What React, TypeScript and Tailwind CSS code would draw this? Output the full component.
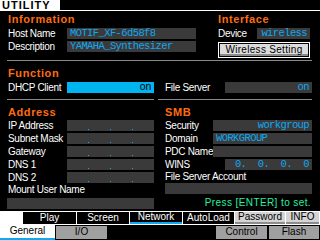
import React from 'react';

const orange = 'text-[#ff6c10]';

// Header text for each section
const Head = ({ children, className }: { children: React.ReactNode; className?: string }) => (
  <div className={`h-[11px] leading-[11px] text-[11px] font-bold tracking-[0.6px] whitespace-nowrap ${orange} ${className ?? ''}`}>{children}</div>
);

// Label + value field on one row
const Field = ({
  label,
  labelW,
  children,
  className,
  boxClass,
}: {
  label: string;
  labelW: string;
  children?: React.ReactNode;
  className?: string;
  boxClass?: string;
}) => (
  <div className={`flex h-[11px] items-center ${className ?? ''}`}>
    <div className={`${labelW} shrink-0 text-[10px] leading-[11px] tracking-[-0.3px] whitespace-nowrap`}>{label}</div>
    <div
      className={`flex-1 h-[11px] flex items-center px-[3px] overflow-hidden whitespace-nowrap font-['Liberation_Mono',monospace] text-[10.5px] leading-[11px] tracking-[-0.6px] ${
        boxClass ?? 'bg-[#3a3a3a] text-[#10a8f0]'
      }`}
    >
      {children}
    </div>
  </div>
);

const IpDots = () => (
  <div className="flex-1 flex justify-end items-end h-full pb-[1px] pr-[18px] gap-[21px]">
    <span className="w-[1px] h-[1px] bg-[#10a8f0]" />
    <span className="w-[1px] h-[1px] bg-[#10a8f0]" />
    <span className="w-[1px] h-[1px] bg-[#10a8f0]" />
  </div>
);

const Sep = ({ className }: { className?: string }) => <div className={`h-[1px] bg-[#8a8a8a] ${className ?? ''}`} />;

const TopTab = ({ children, w, active, light }: { children: React.ReactNode; w: string; active?: boolean; light?: boolean }) => (
  <div
    className={`${w} h-[12px] flex items-center justify-center text-[10px] leading-[12px] whitespace-nowrap ${
      light ? 'bg-[#d4d4d4] text-black border-b-[2px] border-[#8c8c8c]' : 'bg-black text-white'
    } ${active ? 'border-b-[2px] border-[#10a8f0]' : ''}`}
  >
    {children}
  </div>
);

const App = () => {
  return (
    <div className="w-[320px] h-[240px] bg-black text-white overflow-hidden flex flex-col font-['Liberation_Sans',sans-serif]">
      {/* Title */}
      <div className="flex h-[11px] shrink-0">
        <div className="w-[60px] bg-white text-black font-bold text-[11px] leading-[10px] pl-[2px] tracking-[1px]">UTILITY</div>
        <div className="flex-1 border-b border-white" />
      </div>

      {/* Information / Interface */}
      <div className="flex mt-[3px] pl-[8px] shrink-0">
        <div className="w-[188px]">
          <Head>Information</Head>
          <Field label="Host Name" labelW="w-[59px]" className="mt-[3px]">MOTIF_XF-6d58f8</Field>
          <Field label="Description" labelW="w-[59px]" className="mt-[2px]">YAMAHA_Synthesizer</Field>
        </div>
        <div className="w-[92px] ml-[22px]">
          <Head>Interface</Head>
          <Field label="Device" labelW="w-[39px]" className="mt-[3px]">
            <span className="ml-auto">wireless</span>
          </Field>
          <div className="mt-[3px] h-[16px] border border-white p-[1px]">
            <div className="h-full bg-[#dcdcdc] border-b-[2px] border-[#8c8c8c] text-black text-[10px] leading-[11px] flex items-center justify-center tracking-[0.3px] whitespace-nowrap">
              Wireless Setting
            </div>
          </div>
        </div>
      </div>
      <Sep className="mt-[2px] ml-[7px] w-[305px] shrink-0" />

      {/* Function */}
      <div className="flex mt-[7px] pl-[8px] shrink-0">
        <div className="w-[146px]">
          <Head>Function</Head>
          <Field label="DHCP Client" labelW="w-[59px]" className="mt-[3px]" boxClass="bg-[#00b4f0] text-black">
            <span className="ml-auto">on</span>
          </Field>
        </div>
        <div className="w-[147px] ml-[11px] pt-[14px]">
          <Field label="File Server" labelW="w-[60px]">
            <span className="ml-auto">on</span>
          </Field>
        </div>
      </div>
      <div className="flex mt-[6px] shrink-0">
        <Sep className="ml-[7px] w-[147px]" />
        <Sep className="ml-[4px] w-[154px]" />
      </div>

      {/* Address / SMB */}
      <div className="flex mt-[7px] pl-[8px] shrink-0">
        <div className="w-[146px] flex flex-col">
          <Head>Address</Head>
          <Field label="IP Address" labelW="w-[59px]" className="mt-[2px]"><IpDots /></Field>
          <Field label="Subnet Mask" labelW="w-[59px]" className="mt-[2px]"><IpDots /></Field>
          <Field label="Gateway" labelW="w-[59px]" className="mt-[2px]"><IpDots /></Field>
          <Field label="DNS 1" labelW="w-[59px]" className="mt-[2px]"><IpDots /></Field>
          <Field label="DNS 2" labelW="w-[59px]" className="mt-[2px]"><IpDots /></Field>
          <div className="mt-[1px] h-[11px] text-[10px] leading-[11px] tracking-[-0.3px] whitespace-nowrap">Mount User Name</div>
          <div className="mt-[3px] h-[11px] bg-[#3a3a3a] w-[147px] -ml-[1px]" />
        </div>
        <div className="w-[147px] ml-[11px] flex flex-col">
          <Head>SMB</Head>
          <Field label="Security" labelW="w-[48px]" className="mt-[2px]">
            <span className="ml-auto">workgroup</span>
          </Field>
          <Field label="Domain" labelW="w-[48px]" className="mt-[2px]">WORKGROUP</Field>
          <Field label="PDC Name" labelW="w-[48px]" className="mt-[2px]" />
          <Field label="WINS" labelW="w-[60px]" className="mt-[2px]">
            <span className="ml-auto whitespace-pre">0.  0.  0.  0</span>
          </Field>
          <div className="mt-[1px] h-[11px] text-[10px] leading-[11px] tracking-[-0.3px] whitespace-nowrap">File Server Account</div>
          <div className="mt-[1px] h-[11px] bg-[#3a3a3a]" />
          <div className="mt-[3px] h-[11px] text-right text-[10px] leading-[11px] text-[#28f0a0] whitespace-nowrap tracking-[0.4px] pr-[1px]">
            Press [ENTER] to set.
          </div>
        </div>
      </div>

      {/* Tabs */}
      <div className="mt-auto h-[14px] bg-white flex items-start pt-[1px] pl-[23px] gap-[1px] shrink-0">
        <TopTab w="w-[53px]">Play</TopTab>
        <TopTab w="w-[52px]">Screen</TopTab>
        <TopTab w="w-[52px]" active>Network</TopTab>
        <TopTab w="w-[51px]">AutoLoad</TopTab>
        <TopTab w="w-[50px]" light>Password</TopTab>
        <TopTab w="w-[33px]" light>INFO</TopTab>
      </div>
      <div className="h-[15px] flex shrink-0">
        <div className="w-[55px] bg-white text-black text-[10px] leading-[12px] flex justify-center border-b-[2px] border-[#10a8f0]">General</div>
        <div className="w-[53px] bg-[#a0a0a0] text-black text-[10px] leading-[12px] flex justify-center border border-black">I/O</div>
        <div className="flex-1" />
        <div className="w-[53px] bg-[#a0a0a0] text-black text-[10px] leading-[12px] flex justify-center border border-black">Control</div>
        <div className="w-[52px] bg-[#a0a0a0] text-black text-[10px] leading-[12px] flex justify-center border border-black">Flash</div>
      </div>
    </div>
  );
};

export default App;
